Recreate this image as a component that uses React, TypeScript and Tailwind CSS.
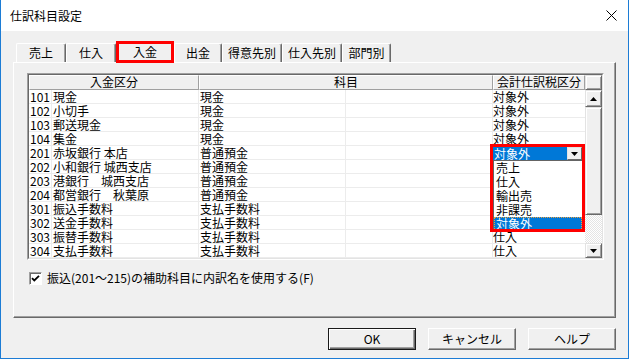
import React from 'react';

type Row = { no: string; name: string; kamoku: string; tax: string };

// rows 201-302: tax cell is covered by the open combo box
const rows: Row[] = [
  { no: '101', name: '現金', kamoku: '現金', tax: '対象外' },
  { no: '102', name: '小切手', kamoku: '現金', tax: '対象外' },
  { no: '103', name: '郵送現金', kamoku: '現金', tax: '対象外' },
  { no: '104', name: '集金', kamoku: '現金', tax: '対象外' },
  { no: '201', name: '赤坂銀行 本店', kamoku: '普通預金', tax: '' },
  { no: '202', name: '小和銀行 城西支店', kamoku: '普通預金', tax: '' },
  { no: '203', name: '港銀行　城西支店', kamoku: '普通預金', tax: '' },
  { no: '204', name: '都営銀行　秋葉原', kamoku: '普通預金', tax: '' },
  { no: '301', name: '振込手数料', kamoku: '支払手数料', tax: '' },
  { no: '302', name: '送金手数料', kamoku: '支払手数料', tax: '' },
  { no: '303', name: '振替手数料', kamoku: '支払手数料', tax: '仕入' },
  { no: '304', name: '支払手数料', kamoku: '支払手数料', tax: '仕入' },
];

const tabs = [
  { label: '売上', w: 'w-[50px]' },
  { label: '仕入', w: 'w-[50px]' },
  { label: '入金', w: 'w-[58px]', selected: true },
  { label: '出金', w: 'w-[48px]' },
  { label: '得意先別', w: 'w-[60px]' },
  { label: '仕入先別', w: 'w-[60px]' },
  { label: '部門別', w: 'w-[49px]' },
];

const taxOptions = ['売上', '仕入', '輸出売', '非課売', '対象外'];

function TriDown() {
  return (
    <svg width="7" height="4" viewBox="0 0 7 4">
      <path d="M0 0h7L3.5 4z" fill="#000" />
    </svg>
  );
}

function TriUp() {
  return (
    <svg width="7" height="4" viewBox="0 0 7 4">
      <path d="M0 4h7L3.5 0z" fill="#000" />
    </svg>
  );
}

function ScrollBar() {
  const raised =
    'flex items-center justify-center bg-[#f0f0f0] border border-t-[#e3e3e3] border-l-[#e3e3e3] border-r-[#696969] border-b-[#696969] shadow-[inset_1px_1px_0_#fff,inset_-1px_-1px_0_#a0a0a0]';
  return (
    <div className="flex w-[17px] flex-col">
      <div className={`h-[15px] ${raised}`} />
      <div className={`h-[17px] ${raised}`}>
        <TriUp />
      </div>
      <div className={`h-[108px] ${raised}`} />
      <div className="h-[28px] bg-[image:repeating-conic-gradient(#ffffff_0_25%,#e4e4e4_0_50%)] bg-[length:2px_2px]" />
      <div className={`h-[15px] ${raised}`}>
        <TriDown />
      </div>
    </div>
  );
}

function TaxDropdown() {
  return (
    <>
      {/* open combo box in row 201 */}
      <div className="absolute left-[464px] top-[72px] z-10 w-[89px]">
        <div className="flex h-[13px]">
          <div className="w-[74px] bg-[#0078d7] pl-px leading-[13px] text-white">対象外</div>
          <div className="flex w-[15px] items-center justify-center border border-t-[#e3e3e3] border-l-[#e3e3e3] border-r-[#696969] border-b-[#696969] bg-[#f0f0f0]">
            <TriDown />
          </div>
        </div>
        <div className="border-t border-l border-[#646464] bg-white">
          {taxOptions.map((opt, i) =>
            i === taxOptions.length - 1 ? (
              <div
                key={opt}
                className="h-[14px] border border-dotted border-[#e8a040] bg-[#0078d7] pl-px leading-[12px] text-white"
              >
                {opt}
              </div>
            ) : (
              <div key={opt} className="h-[14px] pl-[2px] leading-[14px]">
                {opt}
              </div>
            )
          )}
        </div>
      </div>
      {/* red highlight */}
      <div className="pointer-events-none absolute left-[461px] top-[69px] z-20 h-[88px] w-[95px] border-[3px] border-[#ff0000]" />
    </>
  );
}

function Grid() {
  const head =
    'h-[15px] bg-[#f0f0f0] border-t border-l border-t-white border-l-white border-r border-b border-r-[#a0a0a0] border-b-[#a0a0a0] text-center leading-[12px]';
  return (
    <div className="ml-[13px] mt-[10px] w-[577px] border border-t-[#a0a0a0] border-l-[#a0a0a0] border-r-white border-b-white">
      <div className="flex border border-t-[#696969] border-l-[#696969] border-r-[#e3e3e3] border-b-[#e3e3e3] bg-white">
        <div className="relative w-[556px]">
          <div className="flex">
            <div className={`w-[170px] ${head}`}>入金区分</div>
            <div className={`w-[294px] ${head}`}>科目</div>
            <div className={`w-[92px] ${head}`}>会計仕訳税区分</div>
          </div>
          {rows.map((r) => (
            <div key={r.no} className="flex h-[14px] border-b border-[#ececec] leading-[13px]">
              <div className="w-[23px] border-r border-[#ececec] pl-px">{r.no}</div>
              <div className="w-[147px] whitespace-nowrap border-r border-[#ececec] pl-px">{r.name}</div>
              <div className="w-[147px] border-r border-[#ececec] pl-px">{r.kamoku}</div>
              <div className="w-[147px] border-r border-[#ececec]" />
              <div className="w-[92px]">{r.tax}</div>
            </div>
          ))}
          <TaxDropdown />
        </div>
        <ScrollBar />
      </div>
    </div>
  );
}

export default function App() {
  return (
    <div className="flex h-[359px] w-[629px] flex-col border-x border-b border-[#1c7cd5] bg-[#f0f0f0] font-['Noto_Sans_CJK_JP',sans-serif] text-[12px] text-black">
      {/* title bar */}
      <div className="flex h-[31px] shrink-0 items-center justify-between bg-white pl-[9px] pr-[11px]">
        <span className="leading-[14px]">仕訳科目設定</span>
        <svg width="11" height="11" viewBox="0 0 11 11">
          <path d="M0.5 0.5L10.5 10.5M10.5 0.5L0.5 10.5" stroke="#000" strokeWidth="1" />
        </svg>
      </div>

      <div className="flex flex-1 flex-col px-[12px] pt-[10px]">
        {/* tabs */}
        <div className="flex h-[21px] items-end pl-[3px]">
          {tabs.map((t) =>
            t.selected ? (
              <div
                key={t.label}
                className={`${t.w} relative z-10 -mb-px flex h-[22px] items-center justify-center border-[3px] border-[#ff0000] bg-[#f0f0f0] leading-[14px]`}
              >
                {t.label}
              </div>
            ) : (
              <div
                key={t.label}
                className={`${t.w} flex h-[19px] items-center justify-center rounded-t-[2px] border-t border-l border-r border-t-white border-l-white border-r-[#696969] bg-[#f0f0f0] leading-[14px] shadow-[inset_-1px_0_0_#a0a0a0]`}
              >
                {t.label}
              </div>
            )
          )}
        </div>

        {/* tab panel */}
        <div className="h-[256px] border border-t-white border-l-white border-r-[#696969] border-b-[#696969] shadow-[inset_-1px_-1px_0_#a0a0a0]">
          <Grid />
          <div className="ml-[15px] mt-[11px] flex items-center gap-[5px]">
            <div className="flex h-[13px] w-[13px] items-center justify-center border border-t-[#a0a0a0] border-l-[#a0a0a0] border-r-white border-b-white bg-white shadow-[inset_1px_1px_0_#696969]">
              <svg width="9" height="9" viewBox="0 0 9 9">
                <path d="M1 4.2L3.3 6.5L8 1.8" stroke="#000" strokeWidth="1.8" fill="none" />
              </svg>
            </div>
            <span className="leading-[14px]">振込(201～215)の補助科目に内訳名を使用する(F)</span>
          </div>
        </div>

        {/* buttons */}
        <div className="mt-[10px] flex justify-end gap-[12px]">
          <button className="h-[22px] w-[88px] border border-[#1a1a1a] bg-[#f0f0f0] leading-[14px] shadow-[inset_1px_1px_0_#fff,inset_-1px_-1px_0_#696969,inset_-2px_-2px_0_#a0a0a0]">
            OK
          </button>
          <button className="h-[22px] w-[88px] border border-t-white border-l-white border-r-[#696969] border-b-[#696969] bg-[#f0f0f0] leading-[14px] shadow-[inset_-1px_-1px_0_#a0a0a0]">
            キャンセル
          </button>
          <button className="h-[22px] w-[88px] border border-t-white border-l-white border-r-[#696969] border-b-[#696969] bg-[#f0f0f0] leading-[14px] shadow-[inset_-1px_-1px_0_#a0a0a0]">
            ヘルプ
          </button>
        </div>
      </div>
    </div>
  );
}
